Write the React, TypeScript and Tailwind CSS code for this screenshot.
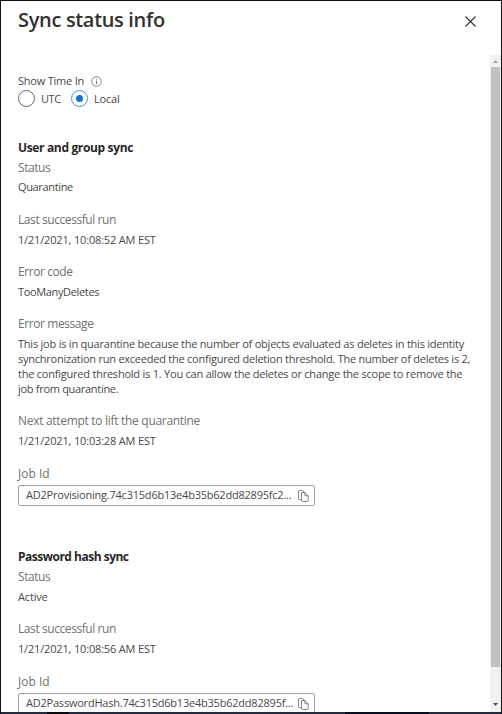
import type { ReactNode } from "react";

function Heading({ children, className = "" }: { children: ReactNode; className?: string }) {
  return <h2 className={`h-5 text-[12px] leading-5 font-bold whitespace-nowrap text-[#292827] ${className}`}>{children}</h2>;
}

function Field({ label, labelClass = "tracking-[-0.42px]", className = "", children }: { label: string; labelClass?: string; className?: string; children: ReactNode }) {
  return (
    <div className={className}>
      <div className={`h-5 text-[12px] leading-5 whitespace-nowrap text-[#73716f] ${labelClass}`}>{label}</div>
      {children}
    </div>
  );
}

function Value({ children, className = "h-5 leading-5 tracking-[-0.17px]" }: { children: ReactNode; className?: string }) {
  return <div className={`text-[11px] whitespace-nowrap text-[#4a4948] ${className}`}>{children}</div>;
}

function CopyIcon() {
  return (
    <svg width="11" height="12" viewBox="0 0 11 12" fill="none" stroke="#85837f" strokeWidth="1" className="shrink-0">
      <path d="M3.5 9.5H1.2Q.5 9.5 .5 8.8V1.2Q.5 .5 1.2 .5H4.6L6.5 2.5" />
      <path d="M3.5 2.5H7L10.2 5.6V10.8Q10.2 11.4 9.6 11.4H4.1Q3.5 11.4 3.5 10.8Z" />
      <path d="M6.8 2.7V5.7H10" />
    </svg>
  );
}

function JobId({ id }: { id: string }) {
  return (
    <div className="mt-px flex h-[21px] w-[297px] items-center justify-between rounded-[2px] border border-[#a3a2a1] pr-[5px] pl-[7px]">
      <span className="pb-[2px] text-[11px] leading-[17px] tracking-[-0.22px] whitespace-nowrap text-[#4a4948]">{id}</span>
      <CopyIcon />
    </div>
  );
}

function Scrollbar() {
  return (
    <div className="flex w-[11px] shrink-0 flex-col items-center bg-[#f1f1f1]">
      <svg width="11" height="12" viewBox="0 0 11 12" className="shrink-0">
        <path d="M3 8L5.5 5L8 8Z" fill="#a3a3a3" />
      </svg>
      <div className="h-[600px] w-[9px] bg-[#c1c1c1]" />
      <svg width="11" height="12" viewBox="0 0 11 12" className="mt-auto mb-px shrink-0">
        <path d="M3 4L5.5 7L8 4Z" fill="#505050" />
      </svg>
    </div>
  );
}

export default function App() {
  return (
    <div className="flex h-[714px] w-[502px] flex-col overflow-hidden border border-[#111] border-b-0 bg-white font-['Open_Sans','Noto_Sans',sans-serif]">
      <header className="flex h-[54px] shrink-0 items-start justify-between pr-[25px] pl-[17px]">
        <h1 className="mt-[4px] text-[20px] leading-[30px] font-semibold tracking-[-0.33px] whitespace-nowrap text-[#323130]">Sync status info</h1>
        <svg width="11" height="11" viewBox="0 0 11 11" fill="none" stroke="#323130" strokeWidth="1.1" className="mt-[15px]">
          <path d="M.5 .5L10.5 10.5M10.5 .5L.5 10.5" />
        </svg>
      </header>
      <div className="flex min-h-0 flex-1">
        <main className="min-w-0 flex-1 overflow-hidden pl-[17px]">
          <div className="mt-4 flex h-5 items-center gap-[7px]">
            <span className="text-[11px] leading-5 tracking-[-0.22px] whitespace-nowrap text-[#4a4948]">Show Time In</span>
            <svg width="11" height="11" viewBox="0 0 11 11" fill="none" stroke="#666462">
              <circle cx="5.5" cy="5.5" r="4.8" strokeWidth=".8" />
              <path d="M5.5 4.6V8.2M5.5 2.7V3.6" strokeWidth=".9" />
            </svg>
          </div>
          <div className="-mt-[1px] flex h-[17px] items-center text-[11px] text-[#4a4948]">
            <span className="size-[17px] rounded-full border border-[#696765]" />
            <span className="mt-[2px] ml-[6px] w-[30px] tracking-[-0.4px]">UTC</span>
            <span className="flex size-[17px] items-center justify-center rounded-full border border-[#4c8fdf]">
              <span className="size-[7px] rounded-full bg-[#1a6fd6]" />
            </span>
            <span className="mt-[2px] ml-[6px] tracking-[-0.2px]">Local</span>
          </div>

          <Heading className="mt-[31px] tracking-[-0.35px]">User and group sync</Heading>
          <Field label="Status"><Value className="h-5 leading-[18px] tracking-[-0.35px]">Quarantine</Value></Field>
          <Field label="Last successful run" className="mt-[12px]"><Value>1/21/2021, 10:08:52 AM EST</Value></Field>
          <Field label="Error code" className="mt-[12px]"><Value className="h-5 leading-5 tracking-[-0.35px]">TooManyDeletes</Value></Field>
          <Field label="Error message" className="mt-[12px]">
            <div className="mt-[2px] text-[11px] leading-[15px] tracking-[-0.224px] whitespace-nowrap text-[#4a4948]">
              <div>This job is in quarantine because the number of objects evaluated as deletes in this identity</div>
              <div className="tracking-[-0.24px]">synchronization run exceeded the configured deletion threshold. The number of deletes is 2,</div>
              <div>the configured threshold is 1. You can allow the deletes or change the scope to remove the</div>
              <div className="tracking-[-0.3px]">job from quarantine.</div>
            </div>
          </Field>
          <Field label="Next attempt to lift the quarantine" labelClass="tracking-[-0.3px]" className="mt-[15px]"><Value>1/21/2021, 10:03:28 AM EST</Value></Field>
          <Field label="Job Id" labelClass="tracking-normal" className="mt-[13px]"><JobId id="AD2Provisioning.74c315d6b13e4b35b62dd82895fc2..." /></Field>

          <Heading className="mt-[41px] tracking-[-0.5px]">Password hash sync</Heading>
          <Field label="Status"><Value>Active</Value></Field>
          <Field label="Last successful run" className="mt-[12px]"><Value>1/21/2021, 10:08:56 AM EST</Value></Field>
          <Field label="Job Id" labelClass="tracking-normal" className="mt-[13px]"><JobId id="AD2PasswordHash.74c315d6b13e4b35b62dd82895f..." /></Field>
        </main>
        <Scrollbar />
      </div>
      <div className="flex h-[2px] w-full shrink-0 bg-[#222b3d]">
        <div className="ml-[46px] w-[22px] bg-[#080a10]" />
        <div className="ml-[276px] w-[84px] bg-[#050d20]" />
      </div>
    </div>
  );
}
